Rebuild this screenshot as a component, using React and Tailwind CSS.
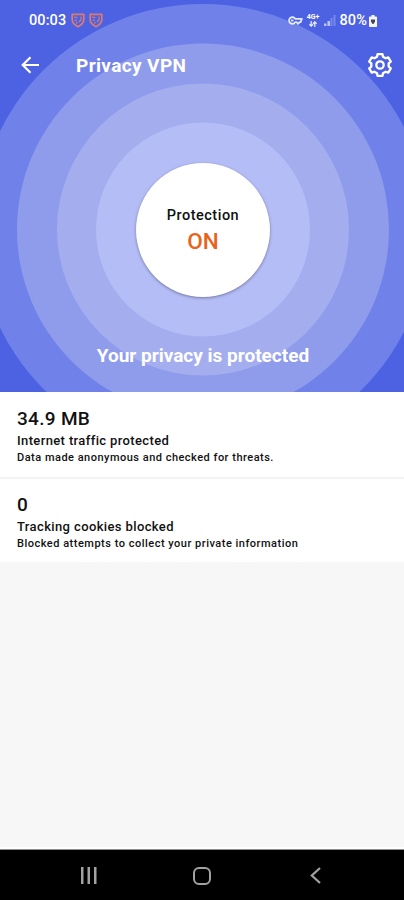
const rings = [
  { r: 225.5, fill: '#7082ea' },
  { r: 186, fill: '#8f9cec' },
  { r: 146, fill: '#a4aeef' },
  { r: 107, fill: '#b4bdf6' }
]

const stats = [
  {
    value: '34.9 MB',
    title: 'Internet traffic protected',
    description: 'Data made anonymous and checked for threats.',
    titleClass: 'tracking-[0.37px]',
    descriptionClass: 'tracking-[0.49px]'
  },
  {
    value: '0',
    title: 'Tracking cookies blocked',
    description: 'Blocked attempts to collect your private information',
    titleClass: 'tracking-[0.38px]',
    descriptionClass: 'tracking-[0.5px]'
  }
]

const ShieldIcon = () => (
  <svg className="w-[14px] h-[15px]" viewBox="0 0 14 15" fill="none" stroke="#dc7b72" strokeWidth="1.7" strokeLinejoin="round">
    <path d="M1.2 1.4h11.6v5.2c0 3.2-2.6 5.6-5.8 7.2-3.2-1.6-5.8-4-5.8-7.2z" />
    <path d="M3.2 4.2l3.2.4M3.6 7l2.2.4M5 10.2l1.6-.8M10 3.6v3.2L8 9" strokeWidth="1.2" />
  </svg>
)

const KeyIcon = () => (
  <svg className="w-[15px] h-[9px]" viewBox="0 0 15 9" fill="none" stroke="#e4e9ff" strokeWidth="1.8" strokeLinejoin="round">
    <path d="M7.2 2.8A3.3 3.3 0 1 0 7.2 6.2H8.6l1.5 1.7 1.5-1.7h1l1.3-3.4z" />
    <path d="M3 4.5h2.5" />
  </svg>
)

const NetworkIcon = () => (
  <div className="flex w-[13px] flex-col items-center">
    <span className="text-[7px] leading-[7px] font-bold">4G+</span>
    <svg className="w-[8px] h-[6px]" viewBox="0 0 8 6" fill="none" stroke="#e4e9ff" strokeWidth="1.3">
      <path d="M2.2 0v5M.4 3.2l1.8 2 1.8-2M5.8 6V1M4 2.8l1.8-2 1.8 2" />
    </svg>
  </div>
)

const SignalIcon = () => (
  <svg className="w-[12px] h-[11px]" viewBox="0 0 12 11">
    <path d="M0 8.5h2.5V11H0zM3.5 6H6v5H3.5z" fill="#b9c4fa" />
    <path d="M6.5 3h2v8h-2zM9.500 0h2v11h-2z" fill="#7688ec" />
  </svg>
)

const BatteryIcon = () => (
  <svg className="w-[8px] h-[12px]" viewBox="0 0 8 12">
    <path d="M2.5 0h3v1.5h1.7a.8.8 0 0 1 .8.8v8.9a.8.8 0 0 1-.8.8H.8a.8.8 0 0 1-.8-.8V2.3a.8.8 0 0 1 .8-.8h1.7z" fill="#f5f6fd" />
    <path d="M2 4.5h4v2L4.5 9h-1L2 6.5z" fill="#424657" />
  </svg>
)

const GearIcon = () => (
  <svg className="w-[24px] h-[24px]" viewBox="-12 -12 24 24" fill="none" stroke="white" strokeWidth="2.3" strokeLinejoin="round">
    <path d="M-2.5-10.8H2.5L3-8.3 5.69-6.75 8.28-7.67 10.78-3.34 8.69-1.55V1.55L10.78 3.34 8.28 7.67 5.69 6.75 3 8.3 2.5 10.8H-2.5L-3 8.3-5.69 6.75-8.28 7.67-10.78 3.34-8.69 1.55V-1.55L-10.78-3.34-8.28-7.67-5.69-6.75-3-8.3z" />
    <circle cx="0" cy="0" r="3.7" />
  </svg>
)

const StatusBar = () => (
  <div className="relative flex h-[41px] items-center pl-[29px] pr-[27px] text-white">
    <span className="w-[42px] pt-px text-[14.5px] font-medium leading-[16px] tracking-[0.1px]">00:03</span>
    <div className="flex gap-[4px]">
      <ShieldIcon />
      <ShieldIcon />
    </div>
    <div className="ml-auto flex items-center">
      <KeyIcon />
      <div className="ml-[4px]">
        <NetworkIcon />
      </div>
      <div className="ml-[4px]">
        <SignalIcon />
      </div>
      <span className="ml-[4px] mr-[2px] pt-px text-[14.5px] font-medium leading-[16px] tracking-[0.1px]">80%</span>
      <BatteryIcon />
    </div>
  </div>
)

const StatCard = ({ stat }) => (
  <div className="pl-[17px] text-[#111]">
    <p className="text-[19px] leading-[22px] font-medium tracking-[0.3px]">{stat.value}</p>
    <p className={`pt-[3px] text-[13px] leading-[16px] font-medium ${stat.titleClass}`}>{stat.title}</p>
    <p className={`pt-[2px] text-[11px] leading-[13px] font-medium ${stat.descriptionClass}`}>{stat.description}</p>
  </div>
)

const App = () => {
  return (
    <div className="flex h-[900px] w-[404px] flex-col overflow-hidden bg-[#f7f7f7] font-['Roboto',sans-serif]">
      {/* Hero */}
      <div className="relative h-[392px] shrink-0 overflow-hidden bg-[#4c62e2]">
        <svg className="absolute inset-0 h-[392px] w-[404px]" viewBox="0 0 404 392">
          {rings.map((ring) => (
            <circle key={ring.r} cx="203" cy="229.5" r={ring.r} fill={ring.fill} />
          ))}
        </svg>

        <StatusBar />

        <div className="relative flex h-[49px] items-center pl-[21px] pr-[12px] text-white">
          <svg className="mb-[2px] h-[18px] w-[19px]" viewBox="0 0 19 18" fill="none" stroke="white" strokeWidth="2.2">
            <path d="M18 9H2M9.5 1.2L1.7 9l7.800 7.800" />
          </svg>
          <h1 className="ml-[36px] text-[19px] leading-none font-bold tracking-[0.38px]">Privacy VPN</h1>
          <button className="mb-px ml-auto" aria-label="Settings">
            <GearIcon />
          </button>
        </div>

        <div className="relative ml-[136px] mt-[73px] flex h-[134px] w-[134px] flex-col items-center rounded-full bg-white pt-[44px] shadow-[0_1px_3px_rgba(50,50,80,0.5)]">
          <span className="text-[14.5px] leading-[17px] font-medium tracking-[0.5px] text-[#111]">Protection</span>
          <span className="mt-[4px] text-[22.5px] leading-[26px] font-medium text-[#e8641b]">ON</span>
        </div>

        <p className="relative mt-[48px] pl-[2px] text-center text-[19px] leading-[22px] font-bold text-white">Your privacy is protected</p>
      </div>

      {/* Stats */}
      <div className="h-[85px] shrink-0 bg-white pt-[16px]">
        <StatCard stat={stats[0]} />
      </div>
      <div className="h-[2px] shrink-0 bg-[#f3f3f3]" />
      <div className="h-[83px] shrink-0 bg-white pt-[15px]">
        <StatCard stat={stats[1]} />
      </div>

      {/* Android navigation */}
      <div className="mt-auto h-[53px] shrink-0 border-t-[2px] border-white bg-black">
        <div className="h-px bg-[#8b8f8f]" />
        <div className="flex h-[51px] items-center pl-[81px]">
          <svg className="h-[17px] w-[16px]" viewBox="0 0 16 17" fill="#a2a2a2">
            <path d="M0 0h2.5v17H0zM6.5 0H9v17H6.500zM13 0h2.5v17H13z" />
          </svg>
          <svg className="ml-[96px] h-[18px] w-[18px]" viewBox="0 0 18 18" fill="none" stroke="#a2a2a2" strokeWidth="2">
            <rect x="1" y="1" width="16" height="16" rx="5" />
          </svg>
          <svg className="ml-[99px] h-[17px] w-[11px]" viewBox="0 0 11 17" fill="none" stroke="#a2a2a2" strokeWidth="2.2">
            <path d="M10 1L1.8 8.5 10 16" />
          </svg>
        </div>
      </div>
    </div>
  )
}

export default App
